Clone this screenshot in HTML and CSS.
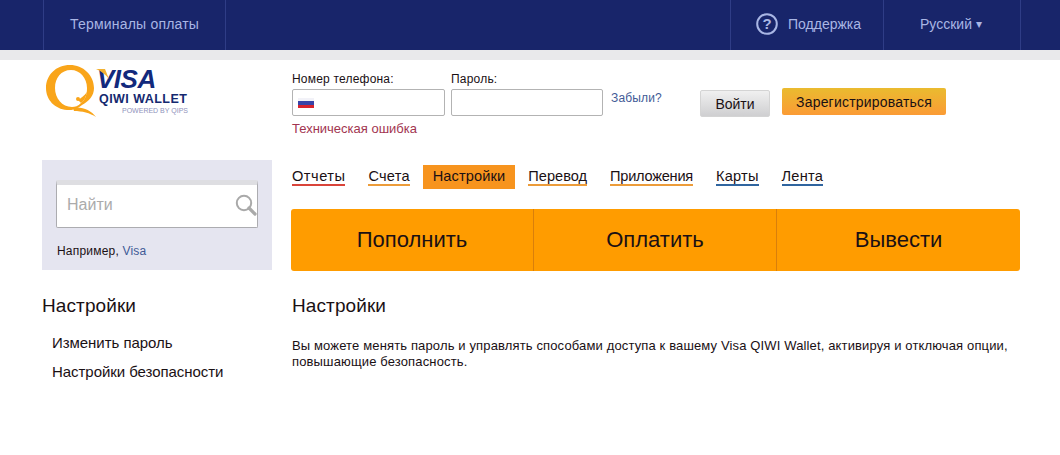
FILE: index.html
```html
<!DOCTYPE html>
<html lang="ru">
<head>
<meta charset="utf-8">
<title>Visa QIWI Wallet</title>
<link rel="stylesheet" href="styles.css">
</head>
<body>
<div class="topbar">
  <div class="topbar-inner">
    <a class="top-item top-terminals">Терминалы оплаты</a>
    <div class="top-spacer"></div>
    <a class="top-item top-support">
      <svg class="help-icon" width="22" height="22" viewBox="0 0 22 22"><circle cx="11" cy="11" r="9.8" fill="none" stroke="#a9b6e4" stroke-width="2"/><text x="11" y="16" text-anchor="middle" class="help-mark">?</text></svg>
      Поддержка
    </a>
    <a class="top-item top-lang">Русский <span class="caret">▾</span></a>
  </div>
</div>
<div class="strip"></div>
<header class="header">
  <div class="logo">
    <svg class="logo-q" width="54" height="56" viewBox="0 0 54 56">
      <path fill-rule="evenodd" d="M25 0C11 0 1 10 1 23c0 12 9 21 21 22 3 0 6 0 8-1 2-1 5-2 7-4 7-4 12-9 12-17C49 10 38 0 25 0zm1 5c9 0 16 8 16 18 0 7-2 12-6 15-3 3-6 4-9 4-10 0-17-9-17-19S16 5 26 5z" fill="#f9a51a"/>
      <path d="M28 43C36 41 46 45 51 52C45 48 37 46 29 46Z" fill="#f9a51a"/>
      <path d="M42 27C41 32 39 36 36 38L33 35C36 33 39 31 42 27Z" fill="#f9a51a"/>
      <circle cx="33" cy="34" r="2" fill="#f9a51a"/>
    </svg>
    <div class="logo-text">
      <div class="logo-visa"><svg class="visa-tick" width="13" height="11" viewBox="0 0 13 11"><path d="M0 0h9l4 10C10 6 5 2 0 0z" fill="#f2b233"/></svg>VISA</div>
      <div class="logo-wallet">QIWI WALLET</div>
      <div class="logo-powered">POWERED BY QIPS</div>
    </div>
  </div>
  <form class="login">
    <div class="field">
      <label class="field-label">Номер телефона:</label>
      <div class="input input-phone">
        <span class="flag"></span>
      </div>
      <div class="error">Техническая ошибка</div>
    </div>
    <div class="field field-pass">
      <label class="field-label">Пароль:</label>
      <div class="input input-pass"></div>
    </div>
    <a class="forgot">Забыли?</a>
    <button type="button" class="btn-login">Войти</button>
    <button type="button" class="btn-register">Зарегистрироваться</button>
  </form>
</header>
<main class="content">
  <aside class="side">
    <div class="search-box">
      <div class="search-input">
        <span class="search-placeholder">Найти</span>
        <svg class="search-icon" width="22" height="22" viewBox="0 0 22 22"><circle cx="9" cy="9" r="7.2" fill="none" stroke="#a9a9a9" stroke-width="2"/><path d="M14 14l6 6" stroke="#a9a9a9" stroke-width="3.2" stroke-linecap="round"/></svg>
      </div>
      <div class="search-hint">Например, <a class="hint-link">Visa</a></div>
    </div>
    <h2 class="side-title">Настройки</h2>
    <ul class="side-menu">
      <li>Изменить пароль</li>
      <li>Настройки безопасности</li>
    </ul>
  </aside>
  <section class="main">
    <nav class="tabs">
      <a class="tab tab-red">Отчеты</a>
      <a class="tab tab-orange tab-accounts">Счета</a>
      <a class="tab tab-active">Настройки</a>
      <a class="tab tab-orange tab-transfer">Перевод</a>
      <a class="tab tab-orange tab-apps">Приложения</a>
      <a class="tab tab-blue tab-cards">Карты</a>
      <a class="tab tab-blue tab-feed">Лента</a>
    </nav>
    <div class="actions">
      <a class="action">Пополнить</a>
      <a class="action">Оплатить</a>
      <a class="action">Вывести</a>
    </div>
    <h1 class="main-title">Настройки</h1>
    <p class="main-text">Вы можете менять пароль и управлять способами доступа к вашему Visa QIWI Wallet, активируя и отключая опции, повышающие безопасность.</p>
  </section>
</main>
</body>
</html>
```

FILE: styles.css
```css
* { box-sizing: border-box; }
html, body { margin: 0; padding: 0; }
body {
  width: 1060px;
  height: 455px;
  overflow: hidden;
  background: #fff;
  color: #1a1014;
  font-family: "Liberation Sans", Arial, sans-serif;
  font-size: 12px;
}
.topbar { height: 50px; background: #18256a; }
.topbar-inner { display: flex; margin: 0 39px 0 43px; height: 50px; border-left: 1px solid #2f3d86; border-right: 1px solid #2f3d86; }
.top-item { display: flex; align-items: center; height: 50px; padding-bottom: 2px; color: #a9b6e4; font-size: 14px; border-right: 1px solid #2f3d86; white-space: nowrap; }
.top-terminals { width: 182px; padding-left: 26px; letter-spacing: .2px; }
.top-spacer { width: 505px; border-right: 1px solid #2f3d86; }
.top-support { width: 153px; padding-left: 25px; gap: 10px; }
.top-lang { width: 136px; padding-left: 36px; border-right: 0; gap: 4px; }
.help-mark { fill: #a9b6e4; font-size: 15px; font-weight: bold; font-family: "Liberation Sans", sans-serif; }
.caret { font-size: 12px; }
.strip { height: 10px; background: #e9e9eb; }

.header { display: flex; height: 90px; padding-left: 45px; }
.logo { display: flex; width: 247px; padding-top: 5px; }
.logo-q { flex: none; }
.logo-text { padding-top: 3px; position: relative; width: 100px; }
.logo-visa { color: #12297c; font-size: 26px; font-weight: bold; font-style: italic; line-height: 22px; margin-left: -2px; letter-spacing: -0.5px; }
.visa-tick { position: absolute; left: -3px; top: 4px; }
.logo-wallet { color: #14296f; font-size: 12.5px; font-weight: bold; line-height: 14px; letter-spacing: .45px; margin-top: 2px; white-space: nowrap; }
.logo-powered { color: #8f92bb; font-size: 7px; line-height: 9px; margin-left: 23px; white-space: nowrap; }

.login { display: flex; align-items: flex-start; padding-top: 12px; }
.field { width: 159px; }
.field-pass { width: 160px; }
.field-label { display: block; height: 17px; line-height: 14px; font-size: 12px; letter-spacing: .2px; }
.input { height: 27px; background: #fff; border: 1px solid #b3b3b3; border-radius: 2px; }
.input-phone { width: 153px; display: flex; align-items: center; padding-left: 5px; }
.input-pass { width: 152px; }
.flag { width: 16px; height: 10px; background: linear-gradient(#f2f2f8 0 33%, #3844a8 33% 66%, #d8232c 66%); }
.error { margin-top: 5px; color: #a23550; font-size: 13px; line-height: 15px; white-space: nowrap; }
.forgot { margin-top: 19px; width: 89px; color: #3f5a96; font-size: 12px; line-height: 15px; letter-spacing: .15px; }
.btn-login, .btn-register { font-family: inherit; font-size: 14px; color: #1a1014; border: 0; padding: 0; border-radius: 2px; }
.btn-login { margin-top: 18px; width: 70px; height: 27px; background: linear-gradient(#f0f0f0, #cfcfd1); border: 1px solid #d4d4d4; }
.btn-register { margin: 16px 0 0 12px; width: 164px; height: 27px; font-size: 14px; letter-spacing: .2px; background: linear-gradient(#eabb2f, #fb9b35); }

.content { display: flex; padding-left: 42px; }
.side { width: 249px; flex: none; padding-top: 10px; }
.search-box { width: 230px; height: 110px; background: #e5e5f0; padding: 20px 14px 0; }
.search-input { position: relative; display: flex; align-items: center; justify-content: space-between; height: 48px; background: #fff; border: 1px solid #acacb0; border-top: 5px solid #dedee2; border-radius: 2px; padding: 0 0 2px 10px; }
.search-placeholder { color: #ababab; font-size: 16px; }
.search-hint { margin-top: 16px; font-size: 12px; line-height: 14px; padding-left: 1px; letter-spacing: .2px; }
.hint-link { color: #3f5a96; }
.side-title { margin: 25px 0 0; font-size: 19px; font-weight: normal; line-height: 22px; letter-spacing: .1px; }
.side-menu { list-style: none; margin: 11px 0 0; padding: 0 0 0 10px; font-size: 15px; line-height: 29px; letter-spacing: -.05px; }

.main { width: 729px; flex: none; padding-top: 15px; }
.tabs { display: flex; height: 44px; margin-left: 1px; }
.tab { font-size: 14.6px; line-height: 18px; height: 21px; border-bottom: 2px solid; padding-top: 2px; white-space: nowrap; }
.tab-red { border-color: #d9443a; letter-spacing: .5px; }
.tab-orange { border-color: #ec9c3a; }
.tab-blue { border-color: #30659f; letter-spacing: .2px; }
.tab-accounts { margin-left: 23px; letter-spacing: .2px; }
.tab-active { margin-left: 13px; height: 24px; padding: 2px 10px 0; background: #f7941e; border: 0; letter-spacing: .12px; }
.tab-transfer { margin-left: 13px; }
.tab-apps { margin-left: 23px; letter-spacing: -.25px; }
.tab-cards { margin-left: 23px; }
.tab-feed { margin-left: 23px; }
.actions { display: grid; grid-template-columns: 242px 243px 1fr; height: 62px; background: #ff9c00; border-radius: 3px; }
.action { display: flex; align-items: center; justify-content: center; font-size: 22px; color: #1a1014; border-left: 1px solid #d97f0b; }
.action:first-child { border-left: 0; }
.main-title { margin: 24px 0 0 1px; font-size: 19px; font-weight: normal; line-height: 22px; letter-spacing: .1px; }
.main-text { margin: 21px 0 0 1px; width: 725px; font-size: 13px; line-height: 16px; letter-spacing: .14px; }
```
